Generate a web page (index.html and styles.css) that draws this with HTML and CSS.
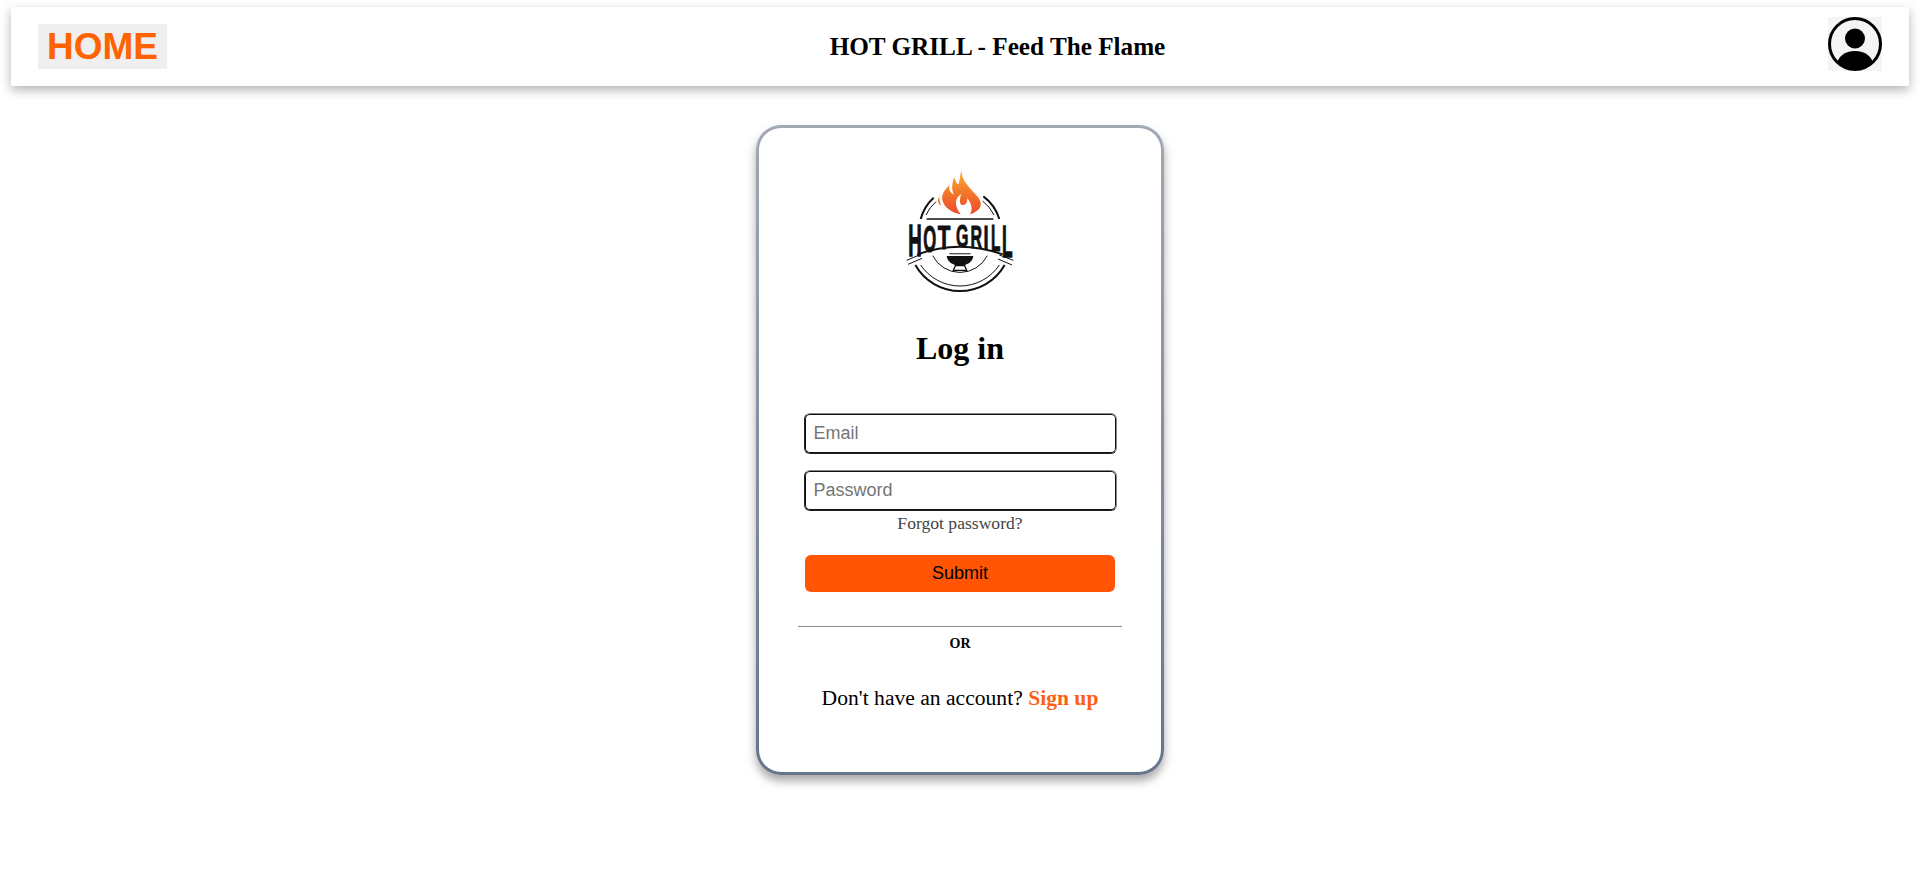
FILE: index.html
```html
<!DOCTYPE html>
<html lang="en">
<head>
    <meta charset="UTF-8">
    <meta name="viewport" content="width=device-width, initial-scale=1.0">
    <title>HOT GRILL - Log in</title>
    <link rel="stylesheet" href="styles.css">
</head>
<body>
    <header class="topbar">
        <button class="home-btn" type="button">HOME</button>
        <h2 class="topbar-title">HOT GRILL - Feed The Flame</h2>
        <button class="profile-btn" type="button" aria-label="Profile">
            <svg viewBox="0 0 54 54" width="54" height="54">
                <defs>
                    <clipPath id="avatarClip"><circle cx="27" cy="27" r="25.5"/></clipPath>
                </defs>
                <circle cx="27" cy="21.5" r="10"/>
                <path clip-path="url(#avatarClip)" d="M9 54V48C9 40 17 34 27 34S45 40 45 48V54Z"/>
                <circle cx="27" cy="27" r="25.5" fill="none" stroke="#000" stroke-width="3"/>
            </svg>
        </button>
    </header>

    <main class="login-card">
        <!-- logo -->
        <svg class="logo" viewBox="0 0 480 450" width="160" height="150">
            <defs>
                <linearGradient id="flameFill" x1="0" y1="0" x2="0" y2="1">
                    <stop offset="0" stop-color="#f7b32b"/>
                    <stop offset="0.5" stop-color="#f4792b"/>
                    <stop offset="1" stop-color="#ec4a2c"/>
                </linearGradient>
            </defs>
            <path fill="url(#flameFill)" d="M245 50C243 76 258 90 272 108C290 128 306 142 302 158C297 172 282 180 270 184C278 170 276 154 262 136C262 150 256 158 246 156C238 154 238 138 244 122C226 134 220 154 242 184C215 178 192 164 187 140C184 122 196 110 208 96C206 110 210 120 222 124C212 106 218 90 222 72C228 86 232 98 236 92C240 80 240 64 245 50Z"/>
            <path fill="url(#flameFill)" d="M178 128C170 142 174 150 184 158C179 146 177 138 178 128Z"/>

            <path class="logo-ring" d="M122 198A132 132 0 0 1 161 134"/>
            <path class="logo-ring" d="M358 198A132 132 0 0 0 310 130"/>
            <path class="logo-ring-thin" d="M138 186A118 118 0 0 1 168 146"/>
            <path class="logo-ring-thin" d="M342 186A118 118 0 0 0 308 144"/>
            <line x1="140" y1="198" x2="340" y2="198" stroke="#111" stroke-width="5"/>

            <g class="logo-word">
                <text transform="translate(105 310) scale(.56 1.32)">H</text>
                <text transform="translate(149 296) scale(.5 1.12)">O</text>
                <text transform="translate(192 288) scale(.62 1.0)">T</text>
                <text transform="translate(247 283) scale(.48 .94)">G</text>
                <text transform="translate(289 284) scale(.48 .95)">R</text>
                <text transform="translate(318 287) scale(.55 .98)">I</text>
                <text transform="translate(347 295) scale(.46 1.1)">L</text>
                <text transform="translate(382 312) scale(.52 1.33)">L</text>
            </g>

            <path class="logo-ring" d="M112 304Q240 258 368 304"/>
            <path class="logo-ring" d="M106 336A154 154 0 0 0 374 336"/>
            <path class="logo-ring-thin" d="M122 336A142 142 0 0 0 358 336"/>
            <path class="logo-ring-thin" d="M158 308A92 92 0 0 0 322 308"/>

            <path class="logo-ring-thin" d="M80 322L122 304M84 334L126 316"/>
            <path class="logo-ring-thin" d="M358 306L400 322M354 318L396 336"/>

            <path d="M208 300H272V304H208Z" fill="#555"/>
            <path d="M200 309H280C278 326 262 338 240 338S202 326 200 309Z" fill="#111"/>
            <path d="M226 338L220 352H260L254 338Z" fill="none" stroke="#111" stroke-width="4"/>
        </svg>

        <h1 class="login-title">Log in</h1>

        <form class="login-form">
            <input class="text-field" type="text" placeholder="Email">
            <input class="text-field" type="password" placeholder="Password">
            <a class="forgot-link" href="#">Forgot password?</a>
            <button class="submit-btn" type="button">Submit</button>
        </form>

        <hr class="divider">
        <p class="or-label">OR</p>
        <p class="signup-text">Don't have an account? <a href="#">Sign up</a></p>
    </main>
</body>
</html>
```

FILE: styles.css
```css
* {
    box-sizing: border-box;
}

body {
    margin: 0;
    background-color: #ffffff;
    color: #000000;
    font-family: "Liberation Serif", "Times New Roman", serif;
}

.topbar {
    display: flex;
    justify-content: space-between;
    align-items: center;
    height: 79px;
    margin: 7px 11px 0;
    padding: 0 27px;
    background-color: #ffffff;
    box-shadow: 0 4px 10px rgba(0, 0, 0, 0.3);
}

.home-btn {
    padding: 2px 9px;
    border: none;
    background-color: #efefef;
    color: #ff6200;
    font-family: "Liberation Sans", Arial, sans-serif;
    font-size: 37px;
    font-weight: bold;
    line-height: 41px;
}

.topbar-title {
    margin: 0;
    font-size: 25.2px;
    font-weight: bold;
}

.profile-btn {
    display: flex;
    width: 54px;
    height: 54px;
    margin-bottom: 5px;
    padding: 0;
    border: none;
    background-color: #f4f4f4;
}

.login-card {
    display: flex;
    flex-direction: column;
    align-items: center;
    width: 408px;
    height: 650px;
    margin: 39px auto 40px;
    padding-top: 25px;
    border: 3px solid transparent;
    border-radius: 25px;
    background: linear-gradient(#ffffff, #ffffff) padding-box, linear-gradient(#a0a9b4, #66758a) border-box;
    box-shadow: 0 6px 10px rgba(0, 0, 0, 0.35);
}

.logo {
    display: block;
}

.logo-ring {
    fill: none;
    stroke: #111111;
    stroke-width: 6;
}

.logo-ring-thin {
    fill: none;
    stroke: #111111;
    stroke-width: 3;
}

.logo-word text {
    fill: #111111;
    stroke: #111111;
    stroke-width: 3px;
    font-family: "Liberation Sans", Arial, sans-serif;
    font-size: 100px;
    font-weight: bold;
    text-anchor: middle;
}

.login-title {
    margin: 27px 0 0;
    font-size: 32px;
    line-height: 37px;
}

.login-form {
    display: flex;
    flex-direction: column;
    align-items: center;
    width: 313px;
    margin-top: 46px;
}

.text-field {
    width: 313px;
    height: 41px;
    padding: 0 9px;
    border: 1px solid;
    border-color: #888888 #888888 #222222 #222222;
    border-radius: 6px;
    background-color: #ffffff;
    box-shadow: inset 0 0 0 1px #111111;
    font-family: "Liberation Sans", Arial, sans-serif;
    font-size: 18px;
}

.text-field + .text-field {
    margin-top: 16px;
}

.forgot-link {
    margin-top: 2px;
    color: #444444;
    font-size: 17.6px;
    line-height: 20px;
    text-decoration: none;
}

.submit-btn {
    width: 310px;
    height: 37px;
    margin-top: 22px;
    border: none;
    border-radius: 6px;
    background-color: #ff5505;
    color: #000000;
    font-family: "Liberation Sans", Arial, sans-serif;
    font-size: 18px;
}

.divider {
    width: 324px;
    margin: 34px 0 0;
    border: none;
    border-top: 1px solid #8f8f8f;
}

.or-label {
    margin: 9px 0 0;
    font-size: 14px;
    font-weight: bold;
    line-height: 16px;
}

.signup-text {
    margin: 34px 0 0;
    font-size: 21.6px;
    line-height: 25px;
}

.signup-text a {
    color: #ff5f15;
    font-weight: bold;
    text-decoration: none;
}
```
